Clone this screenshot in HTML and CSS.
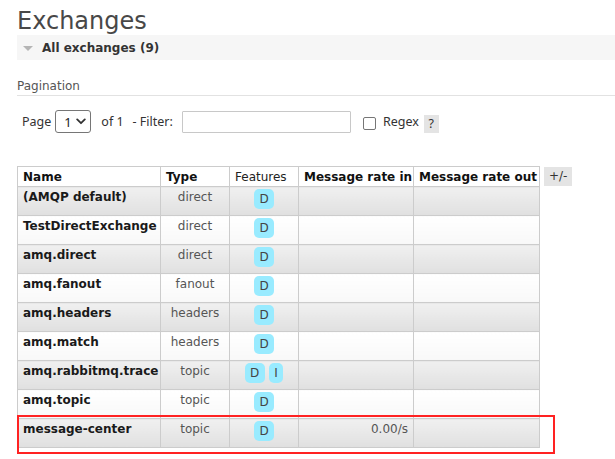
FILE: index.html
```html
<!DOCTYPE html>
<html lang="en">
<head>
<meta charset="utf-8">
<title>Exchanges</title>
<link rel="stylesheet" href="styles.css">
</head>
<body>
<main class="page">
  <h1 class="title">Exchanges</h1>
  <div class="section-bar">
    <svg class="tri" width="10" height="5" viewBox="0 0 10 5"><path d="M0 0H10L5 5Z" fill="#b5b5b5"/></svg>
    <span>All exchanges (9)</span>
  </div>
  <h3 class="pag-title">Pagination</h3>
  <div class="pag-row">
    <span class="lbl">Page</span>
    <span class="sel-wrap">
      <select class="sel"><option>1</option></select>
      <svg class="chev" width="10" height="7" viewBox="0 0 10 7"><path d="M1.2 1.4L5 5.2L8.8 1.4" fill="none" stroke="#333" stroke-width="1.8" stroke-linecap="round" stroke-linejoin="round"/></svg>
    </span>
    <span class="lbl of">of 1</span>
    <span class="lbl filter">- Filter:</span>
    <input class="filter-input" type="text">
    <input class="chk" type="checkbox">
    <span class="lbl regex">Regex</span>
    <span class="help">?</span>
  </div>
  <div class="table-row">
    <table class="list">
      <colgroup>
        <col class="c-name"><col class="c-type"><col class="c-feat"><col class="c-in"><col class="c-out">
      </colgroup>
      <thead>
        <tr><th>Name</th><th>Type</th><th class="th-light">Features</th><th>Message rate in</th><th>Message rate out</th></tr>
      </thead>
      <tbody>
        <tr class="alt1"><td class="name">(AMQP default)</td><td class="type">direct</td><td><div class="feat"><span class="badge">D</span></div></td><td class="rate"></td><td class="rate"></td></tr>
        <tr class="alt2"><td class="name">TestDirectExchange</td><td class="type">direct</td><td><div class="feat"><span class="badge">D</span></div></td><td class="rate"></td><td class="rate"></td></tr>
        <tr class="alt1"><td class="name">amq.direct</td><td class="type">direct</td><td><div class="feat"><span class="badge">D</span></div></td><td class="rate"></td><td class="rate"></td></tr>
        <tr class="alt2"><td class="name">amq.fanout</td><td class="type">fanout</td><td><div class="feat"><span class="badge">D</span></div></td><td class="rate"></td><td class="rate"></td></tr>
        <tr class="alt1"><td class="name">amq.headers</td><td class="type">headers</td><td><div class="feat"><span class="badge">D</span></div></td><td class="rate"></td><td class="rate"></td></tr>
        <tr class="alt2"><td class="name">amq.match</td><td class="type">headers</td><td><div class="feat"><span class="badge">D</span></div></td><td class="rate"></td><td class="rate"></td></tr>
        <tr class="alt1"><td class="name">amq.rabbitmq.trace</td><td class="type">topic</td><td><div class="feat"><span class="badge">D</span><span class="badge">I</span></div></td><td class="rate"></td><td class="rate"></td></tr>
        <tr class="alt2"><td class="name">amq.topic</td><td class="type">topic</td><td><div class="feat"><span class="badge">D</span></div></td><td class="rate"></td><td class="rate"></td></tr>
        <tr class="alt1"><td class="name">message-center</td><td class="type">topic</td><td><div class="feat"><span class="badge">D</span></div></td><td class="rate">0.00/s</td><td class="rate"></td></tr>
      </tbody>
    </table>
    <span class="plusminus">+/-</span>
    <div class="highlight"></div>
  </div>
</main>
</body>
</html>
```

FILE: styles.css
```css
* { box-sizing: border-box; }
html, body { margin: 0; background: #fff; }
body {
  font-family: "DejaVu Sans", Verdana, sans-serif;
  font-size: 12px;
  color: #484848;
}
.page { padding-left: 17px; }

.title {
  margin: 0;
  padding-top: 8px;
  font-size: 24px;
  line-height: 27px;
  font-weight: normal;
  color: #484848;
}

.section-bar {
  height: 25px;
  background: #f6f6f6;
  display: flex;
  align-items: center;
  gap: 9px;
  padding-left: 6px;
  font-weight: bold;
  color: #333;
  line-height: 14px;
}
.tri { margin-top: 2px; }

.pag-title {
  margin: 19px 0 0;
  font-size: 12px;
  font-weight: normal;
  line-height: 14px;
  padding-bottom: 2px;
  border-bottom: 1px solid #e2e2e2;
  color: #555;
}

.pag-row {
  margin-top: 14px;
  height: 23px;
  display: flex;
  align-items: center;
  padding-left: 5px;
  font-family: "Noto Sans", "Open Sans", sans-serif;
  font-size: 12.5px;
  color: #333;
}
.lbl { white-space: nowrap; }
.sel-wrap { position: relative; margin-left: 4px; display: flex; }
.sel {
  appearance: none;
  -webkit-appearance: none;
  width: 36px;
  height: 23px;
  margin: 0;
  padding: 0 0 0 8px;
  border: 1px solid #767676;
  border-radius: 3px;
  background: #fff;
  font-family: "Noto Sans", sans-serif;
  font-size: 13px;
  color: #222;
}
.chev { position: absolute; left: 21px; top: 8px; pointer-events: none; }
.of { margin-left: 10px; }
.filter { margin-left: 9px; }
.filter-input {
  margin: 0 0 0 9px;
  width: 169px;
  height: 22px;
  border: 1px solid #c8c8c8;
  border-radius: 1px;
  padding: 0 4px;
  background: #fff;
}
.chk {
  appearance: none;
  -webkit-appearance: none;
  margin: 3px 0 0 12px;
  width: 13px;
  height: 13px;
  border: 1px solid #767676;
  border-radius: 2px;
  background: #fff;
}
.regex { margin-left: 7px; }
.help {
  align-self: flex-end;
  margin-left: 5px;
  width: 15px;
  height: 18px;
  line-height: 18px;
  text-align: center;
  background: #e4e4e4;
  color: #333;
}

.table-row {
  position: relative;
  margin-top: 33px;
  padding-bottom: 12px;
  display: flex;
  align-items: flex-start;
  gap: 4px;
}
.list {
  border-collapse: collapse;
  table-layout: fixed;
  width: 522px;
}
.c-name { width: 143px; }
.c-type { width: 69px; }
.c-feat { width: 69px; }
.c-in { width: 115px; }
.c-out { width: 126px; }
.list th, .list td {
  border: 1px solid #ccc;
  padding: 3px 5px 0;
  vertical-align: top;
  line-height: 14px;
  text-align: left;
}
.list th {
  padding: 3px 5px 2px;
  background: #fff;
  color: #111;
  font-weight: bold;
  white-space: nowrap;
}
.list th.th-light { font-weight: normal; color: #222; }
.alt1 td { background: linear-gradient(#f0f0f0, #e0e0e0); }
.alt2 td { background: linear-gradient(#ffffff, #f8f8f8); }
.name { font-weight: bold; color: #1a1a1a; white-space: nowrap; }
.type { text-align: center !important; color: #555; }
.rate { text-align: right !important; color: #555; }
.feat {
  display: flex;
  justify-content: center;
  gap: 4px;
  margin: -1px 0 6px;
}
.badge {
  display: inline-block;
  height: 20px;
  line-height: 20px;
  padding: 0 5.5px;
  background: #99ebff;
  border-radius: 5px;
  color: #444;
}
.plusminus {
  margin-top: 1px;
  height: 19px;
  line-height: 19px;
  padding: 0 5px;
  background: #e4e4e4;
  color: #333;
}
.highlight {
  position: absolute;
  left: 0;
  top: 249px;
  width: 538px;
  height: 39px;
  border: 2px solid #f22;
  pointer-events: none;
}
```
